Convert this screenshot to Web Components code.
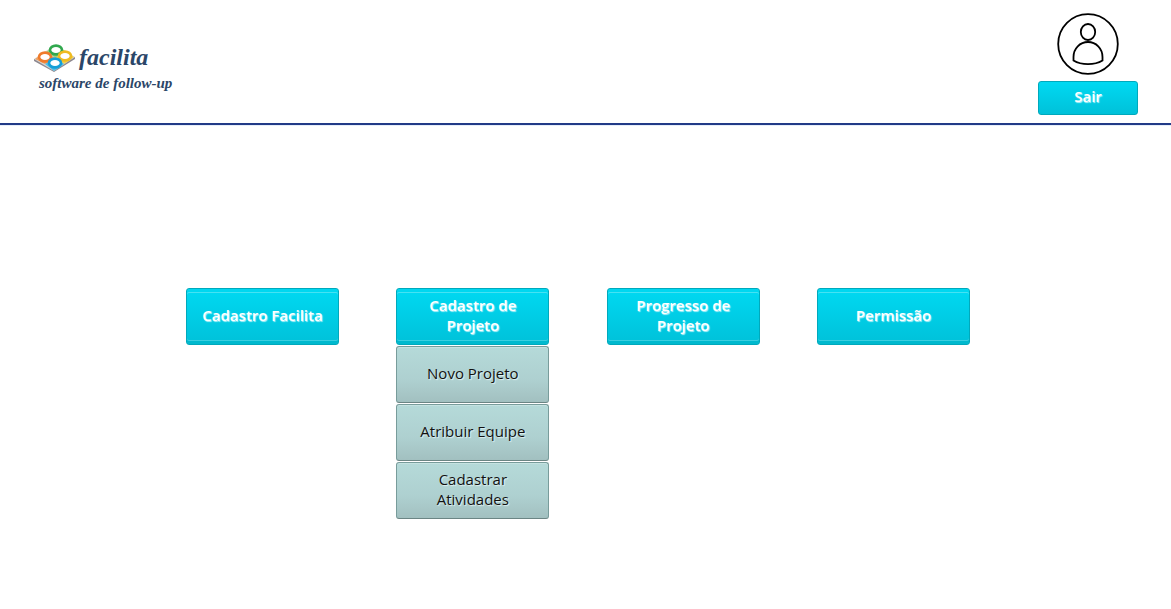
<!DOCTYPE html>
<html lang="pt-BR">
<head>
<meta charset="utf-8">
<title>Facilita - software de follow-up</title>
<style>
  body { margin: 0; background: #fff; font: 15px/20px "Open Sans", "Noto Sans", sans-serif; color: #000; }
  main { padding: 163px 201px 90px 186px; }
</style>
</head>
<body>
<app-header>
  <app-logo slot="brand"></app-logo>
  <user-panel>Sair</user-panel>
</app-header>
<main>
  <menu-bar>
    <menu-group><menu-button>Cadastro Facilita</menu-button></menu-group>
    <menu-group>
      <menu-button>Cadastro de Projeto</menu-button>
      <menu-button slot="items" variant="sub">Novo Projeto</menu-button>
      <menu-button slot="items" variant="sub">Atribuir Equipe</menu-button>
      <menu-button slot="items" variant="sub">Cadastrar Atividades</menu-button>
    </menu-group>
    <menu-group><menu-button>Progresso de Projeto</menu-button></menu-group>
    <menu-group><menu-button>Permissão</menu-button></menu-group>
  </menu-bar>
</main>
<script>
const define = (name, html) => customElements.define(name, class extends HTMLElement {
  constructor() {
    super();
    const template = document.createElement('template');
    template.innerHTML = html;
    this.attachShadow({ mode: 'open' }).append(template.content.cloneNode(true));
  }
});

define('app-header', `
  <style>
    :host { display: block; }
    header { display: flex; justify-content: space-between; align-items: flex-start;
      padding: 13px 33px 8px 34px; border-bottom: 2px solid #213a87; box-shadow: 0 1px #e6eefa; }
    .brand { padding-top: 28px; }
  </style>
  <header><div class="brand"><slot name="brand"></slot></div><slot></slot></header>`);

define('app-logo', `
  <style>
    :host { display: block; color: #2b4668; font-family: "Liberation Serif", serif; font-style: italic; font-weight: 700; }
    .name { display: flex; gap: 4px; align-items: center; font-size: 24px; line-height: 32px; }
    .tag { font-size: 15px; line-height: 20px; padding-left: 5px; }
    svg { display: block; }
  </style>
  <div class="name">
    <svg width="41" height="30" viewBox="0 0 41 30" aria-hidden="true">
      <path d="M0 17v2l20 11 21-13v-2z" fill="#8d8890"/>
      <path d="M0 17L21 3l20 12-21 14z" fill="#d8d6d2"/>
      <path d="M12 10l10-7 9 6-9 7z" fill="#9fd27c"/>
      <path d="M1 17l10-7 10 6-10 6z" fill="#f0a060"/>
      <path d="M21 16l10-7 9 6-10 7z" fill="#f1cf50"/>
      <path d="M11 22l10-6 9 6-10 7z" fill="#4fbde6"/>
      <g fill="#fff" stroke-width="2.600">
        <ellipse cx="22" cy="8" rx="6" ry="4.400" stroke="#31a84e"/>
        <ellipse cx="11" cy="15" rx="6" ry="4.400" stroke="#ef7b2b"/>
        <ellipse cx="31" cy="14" rx="6" ry="4.400" stroke="#efbb20"/>
        <ellipse cx="21" cy="21" rx="6" ry="4.400" stroke="#159fd8"/>
      </g>
    </svg>
    <span>facilita</span>
  </div>
  <div class="tag">software de follow-up</div>`);

define('user-panel', `
  <style>
    :host { display: flex; flex-direction: column; align-items: center; gap: 6px; width: 100px; }
    svg { display: block; }
    button { box-sizing: border-box; width: 100%; min-height: 34px; padding: 4px 6px 8px; border: 1px solid #00a9bc; border-radius: 3px;
      background: linear-gradient(#00d9f2, #00c1d9); color: #fff; font: inherit; font-weight: 600; text-shadow: 1px 1px 1px #b5f3fa; }
  </style>
  <svg width="62" height="62" viewBox="0 0 62 62" fill="none" stroke="#000" stroke-width="1.800" role="img" aria-label="Usuário">
    <circle cx="31" cy="31" r="29.800"/>
    <ellipse cx="31" cy="19" rx="7.200" ry="8"/>
    <path d="M16.500 47.500v-3.500c0-8.500 6.500-15 14.500-15s14.500 6.500 14.500 15v3.500q-6 3.700-14.500 3.700t-14.500-3.700z"/>
  </svg>
  <button type="button"><slot></slot></button>`);

define('menu-bar', `
  <style>
    :host { display: block; }
    nav { display: flex; justify-content: space-between; align-items: flex-start; }
  </style>
  <nav aria-label="Principal"><slot></slot></nav>`);

define('menu-group', `
  <style>
    :host { display: flex; flex-direction: column; gap: 1px; width: 153px; }
  </style>
  <slot></slot><slot name="items"></slot>`);

define('menu-button', `
  <style>
    :host { display: block; }
    button { display: block; box-sizing: border-box; width: 100%; height: 57px; padding: 0 12px 4px; border: 1px solid #00a9bc; border-radius: 3px;
      background: linear-gradient(#00d9f2, #00c1d9); color: #fff; font: inherit; font-weight: 600;
      text-shadow: 1px 1px 1px #b5f3fa; box-shadow: inset 0 3px #00d7f0, inset 0 4px #46e2f3, inset 0 -3px #00b9ce, inset 0 -4px #3acfe0; }
    :host([variant=sub]) button { border-color: #789c9b; border-bottom-color: #6b8584; background: linear-gradient(#b5dad9, #aed0d0 60%, #a2c0c0);
      color: #111; font-weight: 400; text-shadow: 1px 1px 1px #e3f3f3; box-shadow: inset 0 1px #c5e2e1; }
  </style>
  <button type="button"><slot></slot></button>`);
</script>
</body>
</html>
